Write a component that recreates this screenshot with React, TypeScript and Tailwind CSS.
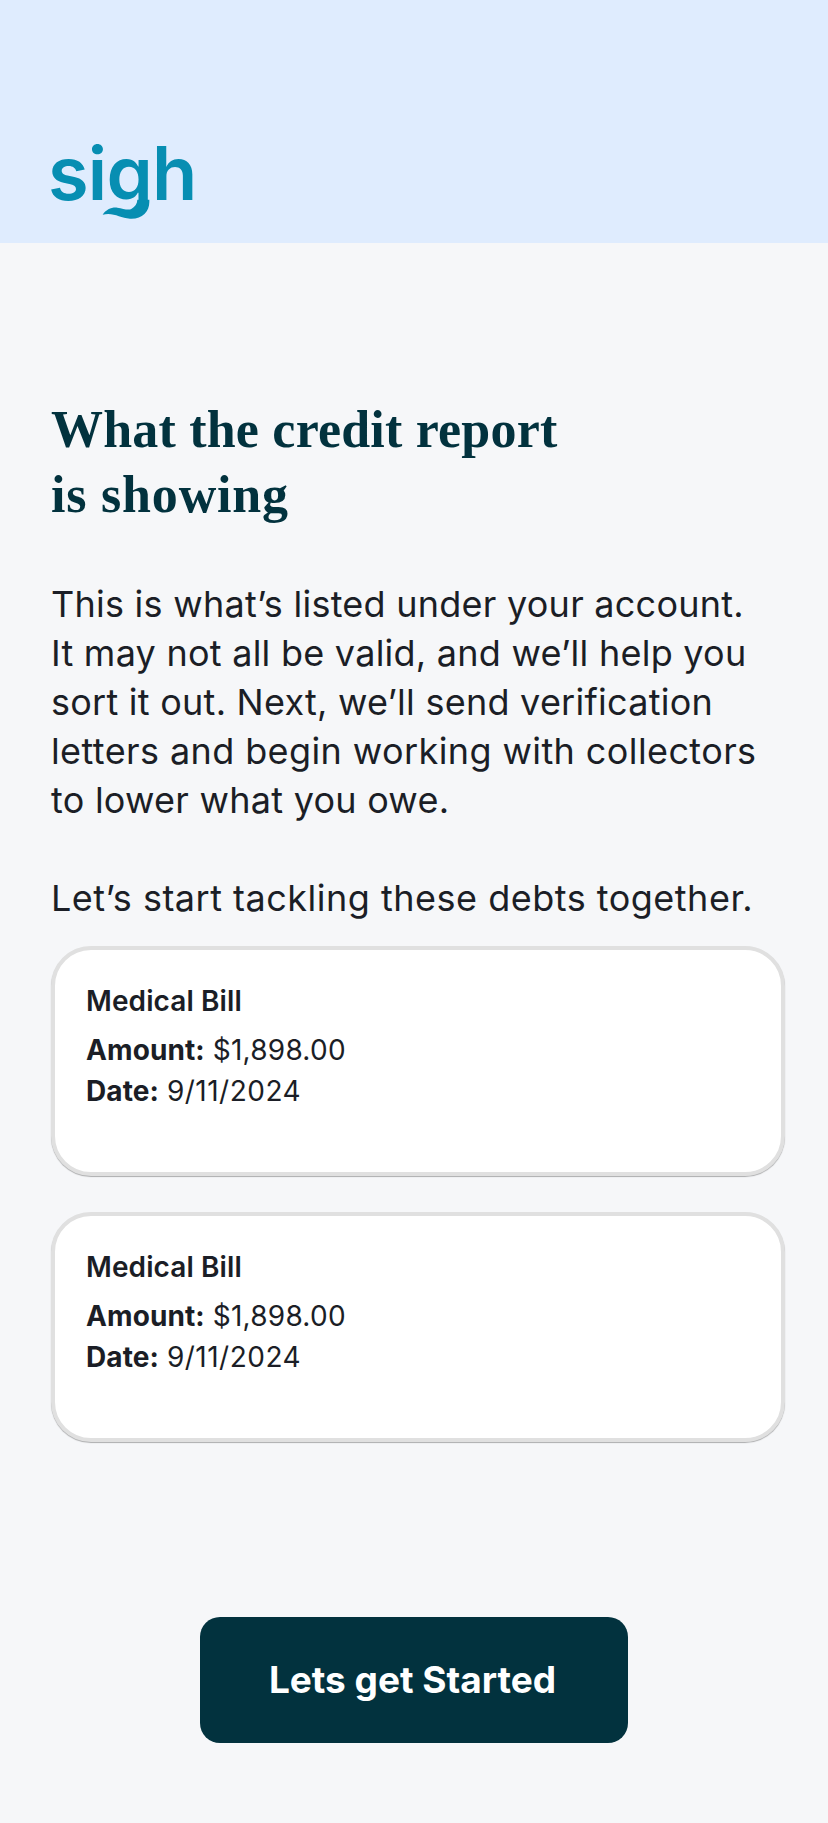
import React from 'react';

const INTER = "font-['Inter',sans-serif]";

const DebtCard: React.FC<{ title: string; amount: string; date: string }> = ({ title, amount, date }) => (
  <div className="h-[230px] rounded-[40px] border-4 border-[#e0e0e0] bg-white pl-[31px] pt-[31px] shadow-[0_1px_1px_rgba(0,0,0,0.3)] text-[#1b1e26]">
    <div className="text-[28px] leading-[40px] font-semibold tracking-[0.1px]">{title}</div>
    <div className="mt-[9px] text-[28px] leading-[41px]">
      <span className="font-bold tracking-[0.1px]">Amount:</span> <span className="tracking-[0.25px]">{amount}</span>
    </div>
    <div className="text-[28px] leading-[41px]">
      <span className="font-bold tracking-[0.1px]">Date:</span> <span className="tracking-[0.5px]">{date}</span>
    </div>
  </div>
);

const Logo: React.FC = () => (
  <div className="relative h-[80px] w-[150px]">
    <span className="absolute left-[-3px] top-[-11px] font-['Inter',sans-serif] text-[74px] leading-[90px] font-semibold tracking-[-0.8px] text-[#078eb2]">
      sigh
    </span>
    {/* header-coloured patch hides the stock descender, the custom tail sits on top */}
    <div className="absolute left-[40px] top-[62px] h-[18px] w-[70px] bg-[#dfecfe]" />
    <svg className="absolute left-[49px] top-[57.67px]" width="53.33" height="25" viewBox="210 230 160 75">
      <path
        d="M322 238L358 238L358 245C358 275 335 297 300 295C270 293 250 275 218 283C228 268 245 260 262 262C280 264 295 272 305 265C315 258 322 250 322 238Z"
        fill="#078eb2"
      />
    </svg>
  </div>
);

export default function App() {
  return (
    <div className={`${INTER} min-h-[1823px] bg-[#f6f7f9]`}>
      <header className="flex h-[243px] items-end bg-[#dfecfe] pb-[24px] pl-[51px]">
        <Logo />
      </header>

      <main className="px-[43px] pt-[154px]">
        <h1 className="pl-[8px] font-['Liberation_Serif',serif] text-[52px] leading-[65px] font-bold tracking-[0.2px] text-[#02323e]">
          What the credit report
          <br />
          <span className="tracking-[0.8px]">is showing</span>
        </h1>

        <p className="mt-[53px] pl-[8px] text-[36px] leading-[49px] tracking-[0.25px] text-[#1b1e26]">
          This is what’s listed under your account.
          <br />
          It may not all be valid, and we’ll help you
          <br />
          sort it out. Next, we’ll send verification
          <br />
          <span className="tracking-[0.4px]">letters and begin working with collectors</span>
          <br />
          to lower what you owe.
        </p>
        <p className="mt-[49px] pl-[8px] text-[36px] leading-[49px] tracking-[0.5px] text-[#1b1e26]">
          Let’s start tackling these debts together.
        </p>

        <div className="mt-[23px] ml-[8px] flex w-[734px] flex-col gap-[36px]">
          <DebtCard title="Medical Bill" amount="$1,898.00" date="9/11/2024" />
          <DebtCard title="Medical Bill" amount="$1,898.00" date="9/11/2024" />
        </div>

        <div className="mt-[175px] flex justify-center">
          <button className="h-[126px] w-[428px] rounded-[20px] bg-[#02323e] pr-[3px] text-[37px] font-bold text-white">
            Lets get Started
          </button>
        </div>
      </main>
    </div>
  );
}
